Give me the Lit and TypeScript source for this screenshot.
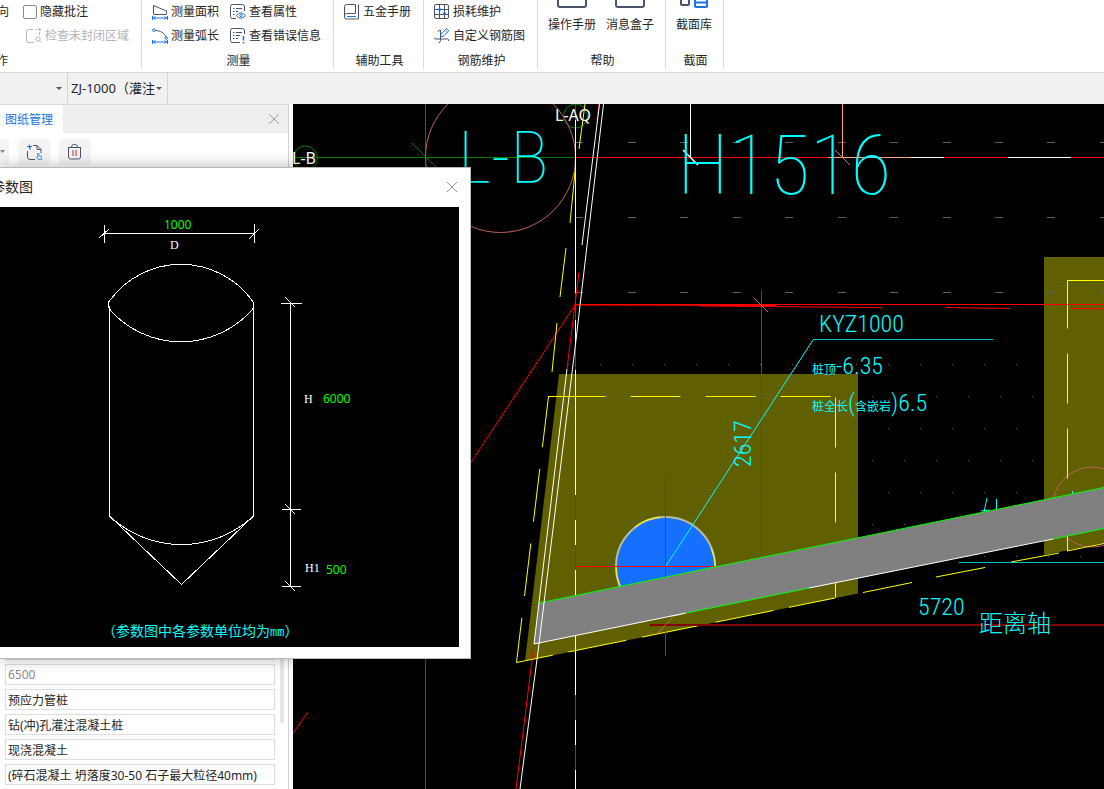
import { LitElement, html, svg, css } from "lit";
import { customElement } from "lit/decorators.js";

type Seg = [number, number, number, number];

const lines = (cls: string, segs: Seg[]) =>
  segs.map(([a, b, c, d]) => svg`<line class=${cls} x1=${a} y1=${b} x2=${c} y2=${d}></line>`);

const icon = (body: unknown, w = 16, h = 16) =>
  html`<svg class="icon" width=${w} height=${h} viewBox="0 0 ${w} ${h}" fill="none" stroke="#4a5468" aria-hidden="true">${body}</svg>`;

const icons = {
  region: icon(svg`<g stroke="#b9b9b9"><path d="M7 1.500H2.500Q.5 1.500 .5 3.500V13Q.5 14.500 2 14.500H8"/><path d="M9 1.500H11M13.500 4V7" /><circle cx="13.500" cy="1.500" r="1" fill="#b9b9b9"/><circle cx="12" cy="11" r="2.200"/><path d="M13.500 12.800L15 14.500"/></g>`),
  area: icon(svg`<path d="M1.500 10V1.500L14.500 7V10.500H1.500"/><g stroke="#1a73e8"><path d="M.5 12V16M15.500 12V16M1 14H15M3.500 12.500L1.500 14L3.500 15.500M12.500 12.500L14.500 14L12.500 15.500"/></g>`),
  arc: icon(svg`<path d="M3 2.500C8 2.500 12.500 5 14 9"/><g stroke="#1a73e8"><circle cx="1.800" cy="2.200" r="1.300"/><circle cx="14.200" cy="10" r="1.300"/><path d="M.5 12V16M15.500 12V16M1 14H15M3.500 12.500L1.500 14L3.500 15.500M12.500 12.500L14.500 14L12.500 15.500"/></g>`),
  props: icon(svg`<path d="M14.500 7V2.500Q14.500 .5 12.500 .5H2.500Q.5 .5 .5 2.500V12.500Q.5 14.500 2.500 14.500H6"/><path d="M3 4.500H4.500M6 4.500H12M3 7.500H4.500M6 7.500H8M3 10.500H4.500"/><g stroke="#1a73e8"><path d="M6.500 11.500Q11 6 15.500 11.500Q11 17 6.500 11.500Z"/><circle cx="11" cy="11.500" r="1.200"/></g>`),
  errors: icon(svg`<path d="M14.500 6V2.500Q14.500 .5 12.500 .5H2.500Q.5 .5 .5 2.500V12.500Q.5 14.500 2.500 14.500H10"/><path d="M3 4.500H4.500M6 4.500H12M3 7.500H4.500M6 7.500H10M3 10.500H4.500M6 10.500H8"/><path stroke="#1a73e8" stroke-width="1.500" d="M13.500 8V12.500M13.500 14V15.500"/>`),
  book: icon(svg`<path d="M11.500 9.500V.5H2.500Q.5 .5 .5 2.500V13Q.5 15 2.500 15H14.500V.5M11.500 9.500H2.500Q.5 9.500 .5 11.500"/><path stroke="#1a73e8" d="M3 12.500H12"/>`),
  grid: icon(svg`<rect x=".5" y=".5" width="14" height="14" rx="1.500"/><path d="M5.500 .5V14.500M10.500 .5V14.500M.5 5.500H14.500M.5 10.500H14.500"/><g fill="#1a73e8" stroke="none"><circle cx="5.500" cy="5.500" r="1.500"/><circle cx="10.500" cy="9.500" r="1.500"/></g>`),
  rebar: icon(svg`<path d="M6.500 2V12.500Q6.500 14.500 4.500 15M6.500 2Q4.500 2 4 4M0 9.500Q0 11 2 11H13.500Q15 11 14.500 13"/><path stroke="#1a73e8" d="M6.500 8.500L7 6L12.500 .5L14.800 2.800L9 8.500L6.500 8.500M11 2.500L13 4.500"/>`),
  close: html`<svg width="12" height="12" viewBox="0 0 12 12" stroke="#999" fill="none" aria-hidden="true"><path d="M1 1L11 11M11 1L1 11"/></svg>`,
};

const dash = (y: number): Seg[] =>
  [575, 628, 680, 733, 785, 838, 890, 943, 995, 1047, 1100].map((x) => [x, y, x + 8, y] as Seg);

@customElement("param-figure")
export class ParamFigure extends LitElement {
  static styles = css`
    :host { display: block; flex: 1; background: #000; min-width: 0; }
    svg { display: block; width: 100%; height: 100%; }
    .w { stroke: #fff; fill: none; shape-rendering: crispEdges; }
    .num { fill: #0f0; font: 12px "Noto Sans", sans-serif; }
    .sym { fill: #fff; font: 12px "Liberation Serif", serif; }
    .note { fill: #0ff; font: 14px "Noto Sans CJK SC", sans-serif; }
    .unit { font: 12px "Liberation Mono", monospace; }
  `;
  render() {
    return html`<svg role="img" aria-label="桩参数图"><g transform="translate(0 -207)">
      ${lines("w", [
        [105, 233.5, 254, 233.5], [104.5, 225, 104.5, 243], [254.5, 224, 254.5, 243],
        [99, 238, 109, 229], [249, 239, 259, 229],
        [109.5, 306, 109.5, 516], [253.5, 306, 253.5, 516],
        [290.5, 302, 290.5, 587], [281, 303.5, 302, 303.5], [282, 509.5, 301, 509.5], [282, 586.5, 301, 586.5],
        [285, 297, 295, 307], [285, 504, 295, 514], [285, 581, 295, 591],
      ])}
      <path class="w" d="M108.500 307V302L111 299A88 88 0 0 1 251 299L253.500 303V308L251 311A95 95 0 0 1 111 311L108.500 307"/>
      <path class="w" d="M109.500 516A105 105 0 0 0 253.500 516L181.500 584.500Z"/>
      <text class="num" x="164" y="229">1000</text>
      <text class="sym" x="170" y="249">D</text>
      <text class="sym" x="304" y="403">H</text>
      <text class="num" x="323" y="403">6000</text>
      <text class="sym" x="305" y="572">H1</text>
      <text class="num" x="326" y="574">500</text>
      <text class="note" x="102" y="636">（参数图中各参数单位均为<tspan class="unit">mm</tspan>）</text>
    </g></svg>`;
  }
}

@customElement("cad-canvas")
export class CadCanvas extends LitElement {
  static styles = css`
    :host { display: block; background: #000; overflow: hidden; min-width: 0; }
    svg { display: block; width: 100%; height: 100%; }
    line, path { fill: none; }
    .white { stroke: #fff; } .red { stroke: #f00; } .yellow { stroke: #ff0; }
    .green { stroke: #008000; } .lime { stroke: #0f0; } .cyan { stroke: #0ff; }
    .teal { stroke: #00c0c0; } .pink { stroke: #c06060; fill: none; } .salmon { stroke: #ffa080; }
    .dark { stroke: #800000; stroke-width: 2; } .gray { stroke: #606060; } .tick { stroke: #c07050; }
    .soft { stroke: #fff; }
    .ring { stroke: #008000; fill: none; }
    .olive { fill: #606000; } .beam { fill: #808080; } .dot { fill: #606060; }
    .pile { fill: #1670ff; stroke: #b8bca0; stroke-width: 2; }
    .big { font: 100 84px "Roboto Condensed", Roboto, sans-serif; fill: #0ff; }
    .large { font: 100 72px "Roboto Condensed", Roboto, sans-serif; fill: #0ff; }
    .mid { font: 300 24px "Roboto Condensed", "Noto Sans CJK SC", sans-serif; fill: #0ff; }
    .cjk { font: 400 12px "Noto Sans CJK SC", sans-serif; }
    .axis { font: 300 24px "Noto Sans CJK SC", sans-serif; fill: #0ff; }
    .tag { font: 16px "Noto Sans", sans-serif; fill: #fff; }
  `;
  render() {
    return html`<svg role="img" aria-label="桩基平面图">
      <defs><pattern id="dots" x="568" y="364" width="32" height="64" patternUnits="userSpaceOnUse">
        <path class="dot" d="M0 0h1v1h-1zM16 32h1v1h-1z"></path>
      </pattern></defs>
      <g transform="translate(-293 -104)">
        <path class="olive" d="M559 374H858V593.500L525 661Z"></path>
        <path class="olive" d="M1044 257H2400V300L1300 504L1044 555Z"></path>
        <rect x="560" y="360" width="1600" height="200" fill="url(#dots)"></rect>

        ${lines("gray", [...dash(142.5), ...dash(217.5), ...dash(292.5)])}
        ${lines("green", [[425.5, 104, 425.5, 2000], [293, 157.5, 575, 157.5], [412, 143, 437, 168]])}
        <circle class="ring" cx="305.500" cy="158" r="12"></circle>
        <circle class="ring" cx="575.500" cy="116" r="12"></circle>
        <circle class="pink" cx="500.500" cy="157.500" r="75"></circle>
        <circle class="pink" cx="1092.500" cy="507" r="40"></circle>

        ${lines("red", [
          [575, 157.5, 3000, 157.5], [575, 304.5, 3000, 304.5], [575, 305, 776, 305.5], [700, 306, 881, 307.5],
          [946, 307.5, 1009, 308.5], [1072, 308.5, 1160, 309.5],
          [761.5, 290, 761.5, 557], [575, 305, 400, 570], [308, 712, 293, 733],
          [579, 272, 567, 369], [599, 104, 597, 120], [575.5, 104, 575.5, 120],
          [534, 644, 516, 789], [516, 789, 366, 2000],
        ])}
        ${lines("teal", [[813, 339.5, 993, 339.5]])}
        ${lines("yellow", [[585, 104, 579, 149], [575, 172, 570, 223], [566, 248, 560, 297], [557, 323, 552, 372]])}
        <path class="yellow" stroke-dasharray="53 22" stroke-dashoffset="2" d="M548.500 396.500L516.500 662.500"></path>
        <path class="yellow" stroke-dasharray="50 25" d="M555.500 396.500H835.500"></path>
        <path class="yellow" d="M548 396.500H556"></path>
        <path class="yellow" stroke-dasharray="50 25" d="M835.500 397.500V598"></path>
        <path class="yellow" stroke-dasharray="59 16" stroke-dashoffset="22" d="M516.500 662.500L835 598"></path>
        <path class="yellow" stroke-dasharray="50 25" stroke-dashoffset="2" d="M1067.500 280.500V551"></path>
        ${lines("yellow", [[1067, 280.5, 3000, 280.5], [863, 592.5, 912, 582.5], [936, 577, 985, 567.5], [1011, 562, 1059, 553], [1067, 551, 1104, 543.5], [1104, 543.5, 1160, 532]])}

        ${lines("white", [
          [575.5, 120, 575.5, 293], [575.5, 320, 575.5, 344], [575.5, 370, 575.5, 495], [575.5, 520, 575.5, 545],
          [575.5, 570, 575.5, 695], [575.5, 720, 575.5, 745], [575.5, 770, 575.5, 2000],
          [910, 157.5, 944, 157.5], [1008, 157.5, 1071, 157.5], [690.5, 104, 690.5, 158],
        ])}
        ${lines("red", [[575.5, 293, 575.5, 320], [575.5, 344, 575.5, 370], [575.5, 495, 575.5, 520], [575.5, 545, 575.5, 570], [575.5, 695, 575.5, 720], [575.5, 745, 575.5, 770]])}
        ${lines("salmon", [[828, 157.5, 910, 157.5], [842.5, 104, 842.5, 158]])}

        <circle class="pile" cx="665.500" cy="566.500" r="49.500"></circle>
        <path class="yellow" d="M635 527A50 50 0 0 1 660 517M711 548A50 50 0 0 1 715.500 566M616 566A50 50 0 0 0 620 586"></path>
        ${lines("red", [[575, 566.5, 715, 566.5], [665.5, 476, 665.5, 656]])}
        ${lines("dark", [[650, 625, 3000, 625]])}
        ${lines("cyan", [[813, 340, 666, 566], [987, 498, 984, 512], [981, 511, 990, 510], [996.5, 499, 996.5, 509], [1072.5, 491, 1072.5, 495]])}
        <path class="beam" d="M539 603L1104 487.500L2400 223V264L1104 528.500L534 644Z"></path>
        ${lines("lime", [[539, 603, 1104, 487.5], [1104, 487.5, 2400, 223], [686, 613, 809, 588], [1053, 539, 1104, 528.5], [1104, 528.5, 2400, 264]])}
        ${lines("white", [[534, 644, 686, 613], [809, 588, 1053, 539]])}
        ${lines("soft", [[599.5, 104, 582, 245], [567, 369, 534, 644], [603.5, 104, 576, 340], [576, 340, 539, 644], [539, 644, 520, 789], [520, 789, 361, 2000]])}
        ${lines("teal", [[959, 562.5, 3000, 562.5]])}
        ${lines("tick", [[754, 298, 768, 312], [658, 633, 672, 618], [835, 150, 850, 165]])}
        <path class="white" stroke-width="1.500" d="M683 150L698 165"></path>

        <text class="large" x="458" y="183">L-B</text>
        <text class="big" x="677" y="194">H1516</text>
        <text class="mid" x="819" y="332">KYZ1000</text>
        <text class="mid" x="812" y="374"><tspan class="cjk">桩顶</tspan>-6.35</text>
        <text class="mid" x="812" y="411"><tspan class="cjk">桩全长</tspan>(<tspan class="cjk">含嵌岩</tspan>)6.5</text>
        <text class="mid" transform="translate(751 467) rotate(-90)">2617</text>
        <text class="mid" x="918" y="615">5720</text>
        <text class="axis" x="979" y="632">距离轴</text>
        <text class="tag" x="292" y="164">L-B</text>
        <text class="tag" x="555" y="121">L-AQ</text>
      </g>
    </svg>`;
  }
}

@customElement("app-root")
export class AppRoot extends LitElement {
  static styles = css`
    * { box-sizing: border-box; }
    :host {
      display: flex; flex-direction: column; position: relative; height: 100vh; overflow: hidden;
      background: #fff; color: #262626; font: 12px/20px "Noto Sans", "Noto Sans CJK SC", sans-serif;
    }
    button { font: inherit; color: inherit; border: 0; background: none; padding: 0; margin: 0; display: flex; align-items: center; white-space: nowrap; cursor: pointer; }
    button:disabled { color: #b4b4b4; cursor: default; }
    .icon { display: block; flex: none; }

    .ribbon { display: flex; height: 73px; flex: none; border-bottom: 1px solid #d8d8d8; overflow: hidden; }
    .group { display: flex; flex-direction: column; height: 69px; padding: 0 8px 0 10px; border-right: 1px solid #dcdcdc; }
    .group:first-child { width: 142px; padding: 0; }
    .cols { display: flex; gap: 11px; height: 51px; flex: none; }
    .stack { display: flex; flex-direction: column; }
    .stack button, .line { height: 24px; gap: 3px; }
    .wide { padding-right: 4px; }
    .line { display: flex; align-items: center; gap: 14px; }
    .line.next { padding-left: 26px; }
    .flush { margin-left: -3px; }
    .check { display: flex; align-items: center; gap: 3px; }
    .check input { appearance: none; width: 14px; height: 14px; margin: 0; border: 1px solid #8a8a8a; border-radius: 2px; background: #fff; }
    .caption { text-align: center; }
    .first .caption { text-align: left; margin-left: -4px; }
    .pair { gap: 10px; }
    .big { padding-right: 8px; }
    .big .cols { padding-right: 3px; }
    .tool { flex-direction: column; justify-content: flex-start; gap: 6px; }
    .tool svg { display: block; }

    .bar { display: flex; height: 31px; flex: none; background: #f1f1f1; }
    .pick { position: relative; display: flex; border-right: 1px solid #d4d4d4; }
    .pick select { appearance: none; border: 0; background: none; font: inherit; font-size: 13px; color: inherit; padding: 0 12px 2px 3px; margin: 0; width: 99px; outline: 0; }
    .pick.narrow select { width: 67px; }
    .pick::after { content: ""; position: absolute; right: 5px; top: 14px; border: 3px solid transparent; border-top-color: #555; border-bottom: 0; }

    .work { display: flex; flex: 1; min-height: 0; }
    .side { width: 289px; flex: none; display: flex; flex-direction: column; border-right: 1px solid #d4d4d4; border-top: 1px solid #d8d8d8; margin-right: 4px; }
    .tabs { display: flex; justify-content: space-between; height: 28px; background: #eeeef0; padding-right: 8px; }
    .tab { background: #fff; color: #1a73e8; padding: 1px 10px 0 5px; }
    .tools { display: flex; gap: 9px; padding-top: 6px; }
    .tools button { width: 32px; height: 26px; background: #f4f4f5; border-radius: 3px; justify-content: center; }
    .tools .cut { width: 9px; justify-content: flex-start; }
    .props { flex: 1; min-height: 0; display: flex; justify-content: space-between; align-items: flex-end; padding-right: 4px; }
    .fields { width: 275px; padding: 0 0 4px 5px; display: flex; flex-direction: column; gap: 4px; }
    .fields input { display: block; width: 270px; height: 21px; border: 1px solid #dedede; padding: 0 2px; font: inherit; color: #262626; background: #fff; outline: 0; }
    .fields input:disabled { color: #8c8c8c; }
    .scroll { width: 4px; height: 100px; margin-bottom: 66px; background: #e6e6e6; border-radius: 2px; }
    cad-canvas { flex: 1; }

    .dialog { position: absolute; left: 0; top: 167px; width: 471px; height: 492px; display: flex; flex-direction: column; background: #fff; border: 1px solid #b8b8b8; border-left: 0; box-shadow: 0 0 14px rgba(0, 0, 0, 0.3); padding: 0 11px 11px 0; }
    .head { display: flex; justify-content: space-between; align-items: center; height: 39px; flex: none; padding: 0 1px 2px 0; }
    .title { font-size: 14px; font-weight: 400; margin: 0 0 0 -9px; }
  `;

  render() {
    const fields = ["6500", "预应力管桩", "钻(冲)孔灌注混凝土桩", "现浇混凝土", "(碎石混凝土 坍落度30-50 石子最大粒径40mm)"];
    return html`
      <header class="ribbon">
        <section class="group first">
          <div class="cols"><div class="stack">
            <div class="line"><button class="flush">向</button>
              <label class="check"><input type="checkbox" />隐藏批注</label></div>
            <div class="line next"><button disabled>${icons.region}检查未封闭区域</button></div>
          </div></div>
          <div class="caption">作</div>
        </section>
        <section class="group">
          <div class="cols">
            <div class="stack"><button>${icons.area}测量面积</button><button>${icons.arc}测量弧长</button></div>
            <div class="stack wide"><button>${icons.props}查看属性</button><button>${icons.errors}查看错误信息</button></div>
          </div>
          <div class="caption">测量</div>
        </section>
        <section class="group">
          <div class="cols"><div class="stack wide"><button>${icons.book}五金手册</button></div></div>
          <div class="caption">辅助工具</div>
        </section>
        <section class="group">
          <div class="cols"><div class="stack wide"><button>${icons.grid}损耗维护</button><button>${icons.rebar}自定义钢筋图</button></div></div>
          <div class="caption">钢筋维护</div>
        </section>
        <section class="group big">
          <div class="cols pair">
            <button class="tool"><svg width="32" height="9" fill="none" stroke="#4a5468" stroke-width="2"><path d="M2 0V5Q2 7 4 7H28Q30 7 30 5V0"/></svg>操作手册</button>
            <button class="tool"><svg width="32" height="9" fill="none" stroke="#4a5468" stroke-width="2"><path d="M2 0V5Q2 7 4 7H28Q30 7 30 5V0"/></svg>消息盒子</button>
          </div>
          <div class="caption">帮助</div>
        </section>
        <section class="group big">
          <div class="cols">
            <button class="tool"><svg width="32" height="9" fill="none" stroke-width="2"><path stroke="#4a5468" d="M3 0V4Q3 5 4 5H10Q11 5 11 4V0"/><path stroke="#1a73e8" d="M17 0V6Q17 7 18 7H28Q29 7 29 6V0M17 2.500H29"/></svg>截面库</button>
          </div>
          <div class="caption">截面</div>
        </section>
      </header>

      <div class="bar">
        <div class="pick narrow"><select aria-label="构件类型"><option></option></select></div>
        <div class="pick"><select aria-label="构件"><option>ZJ-1000（灌注桩）</option></select></div>
      </div>

      <main class="work">
        <aside class="side">
          <div class="tabs"><button class="tab">图纸管理</button><button aria-label="关闭">${icons.close}</button></div>
          <div class="tools">
            <button class="cut" aria-label="更多"><svg width="8" height="4"><path d="M0 0H5L2.500 3Z" fill="#888"/></svg></button>
            <button aria-label="导入">${icon(svg`<path d="M7 1.500H11L15 5.500V9M1.500 7V13Q1.500 15.500 4 15.500H9M11 1.500V5.500H15"/><path stroke="#1a73e8" d="M1 2.500H6M3.500 .5V4.500M4 2.500V5.500"/><path stroke="#5b9df0" fill="#dbe9fd" d="M11.500 9.500V13H10.500L12 15.500H15.500V12H13V9.500Z"/>`)}</button>
            <button aria-label="删除">${icon(svg`<path d="M1 3.500H14M4.500 3.500Q4.500 .5 6.500 .5H8.500Q10.500 .5 10.500 3.500M1.500 3.500V13Q1.500 15 3.500 15H11.500Q13.500 15 13.500 13V3.500"/><path stroke="#e02020" d="M6 6V12M9 6V12"/>`)}</button>
          </div>
          <div class="props">
            <div class="fields">
              <input aria-label="属性" />
              ${fields.map((v, i) => html`<input aria-label="属性值" .value=${v} ?disabled=${i === 0} />`)}
            </div>
            <div class="scroll"></div>
          </div>
        </aside>
        <cad-canvas></cad-canvas>
      </main>

      <section class="dialog" role="dialog" aria-label="参数图">
        <div class="head"><h2 class="title">参数图</h2><button aria-label="关闭对话框">${icons.close}</button></div>
        <param-figure></param-figure>
      </section>`;
  }
}
